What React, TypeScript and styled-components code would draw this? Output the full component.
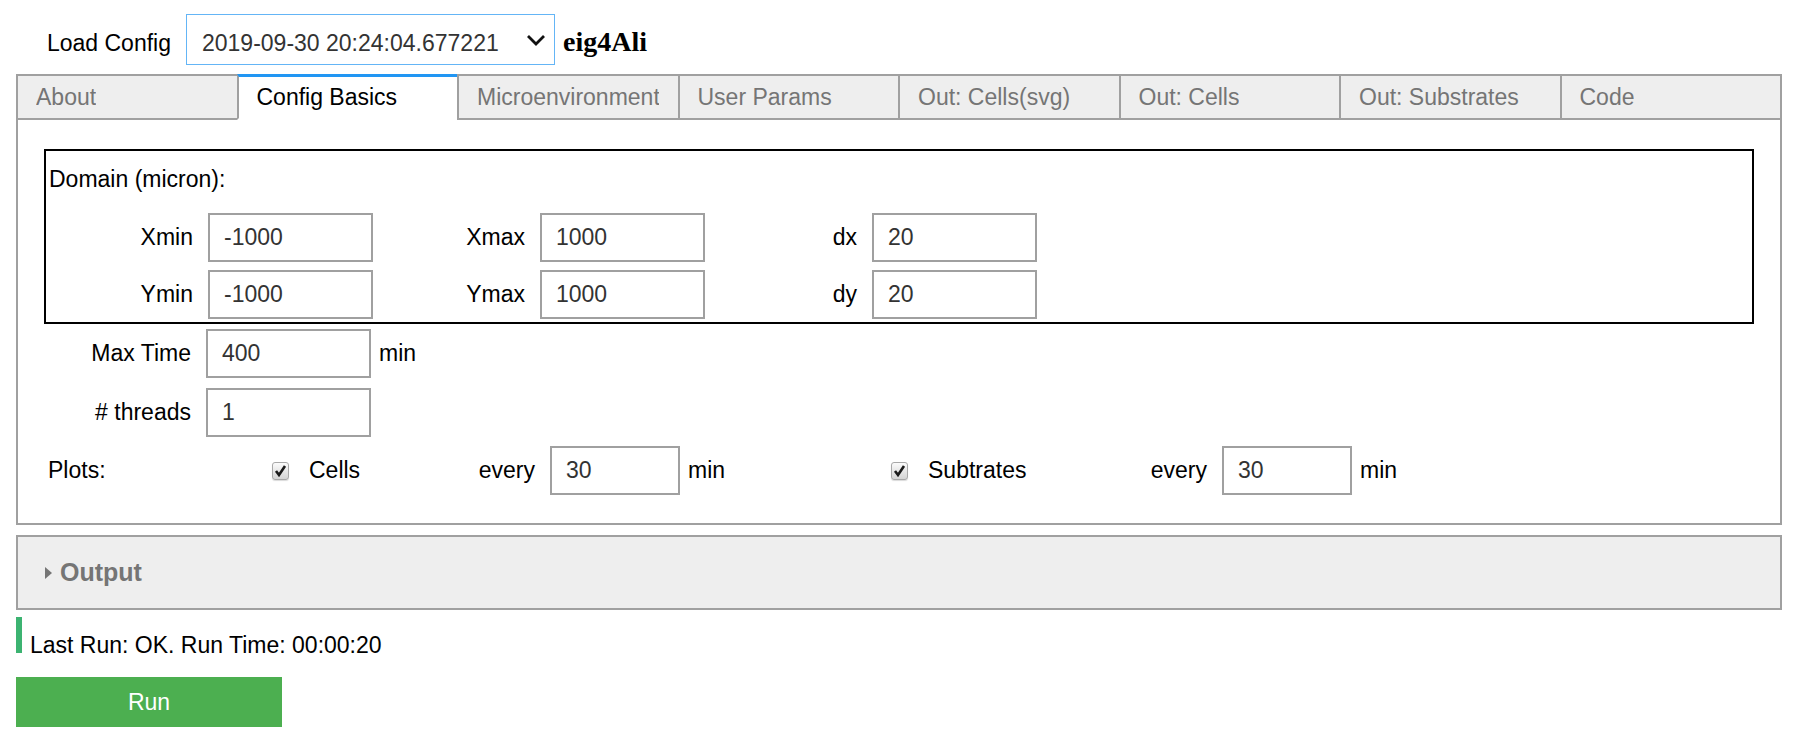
import React from 'react';
import styled, { createGlobalStyle } from 'styled-components';

const GlobalStyle = createGlobalStyle`
  html, body {
    margin: 0;
    padding: 0;
    background: #fff;
  }
  body {
    font-family: 'Liberation Sans', Arial, Helvetica, sans-serif;
    font-size: 23px;
    color: #000;
  }
  * {
    box-sizing: border-box;
  }
`;

const Page = styled.div`
  width: 1766px;
  margin-left: 16px;
  padding-top: 14px;
`;

const Header = styled.div`
  display: flex;
  align-items: center;
  height: 51px;
`;

const HeaderLabel = styled.label`
  flex: none;
  width: 170px;
  padding: 7px 15px 0 0;
  text-align: right;
  line-height: 26px;
`;

const ConfigSelect = styled.div`
  flex: none;
  width: 369px;
  height: 51px;
  border: 1px solid #64b5f6;
  display: flex;
  align-items: center;
  justify-content: space-between;
  padding: 0 8px 0 15px;
  color: #333;
`;

const SelectText = styled.span`
  padding-top: 7px;
  line-height: 26px;
  white-space: nowrap;
`;

const Title = styled.b`
  margin-left: 8px;
  padding-top: 3px;
  font-family: 'Liberation Serif', 'Times New Roman', serif;
  font-size: 28px;
  line-height: 31px;
`;

const TabBar = styled.div`
  display: flex;
  margin-top: 9px;
`;

const Tab = styled.div<{ $active?: boolean }>`
  flex: 1 1 0;
  min-width: 0;
  height: 46px;
  display: flex;
  align-items: center;
  padding: 0 19px 0 18px;
  border: 2px solid #a0a0a0;
  border-right: none;
  background: ${(p) => (p.$active ? '#fff' : '#eeeeee')};
  color: ${(p) => (p.$active ? '#000' : '#757575')};
  white-space: nowrap;
  overflow: hidden;
  ${(p) =>
    p.$active &&
    `
    border-top: 3px solid #2196f3;
    border-bottom-color: #fff;
  `}
  &:last-child {
    border-right: 2px solid #a0a0a0;
  }
`;

const TabText = styled.span`
  display: block;
  overflow: hidden;
  white-space: nowrap;
`;

const Panel = styled.div`
  border: 2px solid #a0a0a0;
  border-top: none;
  padding: 29px 26px 28px 26px;
`;

const DomainBox = styled.div`
  border: 2px solid #000;
  padding-bottom: 3px;
`;

const DomainTitle = styled.div`
  height: 62px;
  padding: 15px 0 0 3px;
  line-height: 26px;
`;

const DomainRows = styled.div`
  display: flex;
  flex-direction: column;
  gap: 8px;
`;

const Row = styled.div<{ $gap?: number; $top?: number }>`
  display: flex;
  align-items: center;
  height: 49px;
  gap: ${(p) => p.$gap ?? 0}px;
  margin-top: ${(p) => p.$top ?? 0}px;
`;

const Field = styled.div`
  display: flex;
  align-items: center;
  flex: none;
`;

const FieldLabel = styled.label<{ $width: number }>`
  flex: none;
  width: ${(p) => p.$width}px;
  padding-right: 15px;
  text-align: right;
  white-space: nowrap;
`;

const NumberInput = styled.input<{ $width: number }>`
  flex: none;
  width: ${(p) => p.$width}px;
  height: 49px;
  border: 2px solid #a0a0a0;
  border-radius: 0;
  padding: 0 12px 0 14px;
  font: inherit;
  color: #333;
  background: #fff;
  outline: none;
`;

const Unit = styled.span<{ $width?: number }>`
  flex: none;
  margin-left: 8px;
  width: ${(p) => (p.$width ? `${p.$width}px` : 'auto')};
`;

const PlotsLabel = styled.span`
  flex: none;
  width: 228px;
  padding-left: 4px;
`;

const CheckField = styled.label<{ $width: number }>`
  flex: none;
  width: ${(p) => p.$width}px;
  display: flex;
  align-items: center;
  gap: 20px;
`;

const CheckBox = styled.span`
  flex: none;
  width: 17px;
  height: 18px;
  border: 1px solid #a8a8a8;
  border-radius: 3px;
  background: linear-gradient(#fbfbfb, #d4d4d4);
  box-shadow: 0 1px 1px rgba(0, 0, 0, 0.15);
  display: flex;
  align-items: center;
  justify-content: center;
`;

const OutputBox = styled.div`
  margin-top: 10px;
  height: 75px;
  background: #eeeeee;
  border: 2px solid #a0a0a0;
  display: flex;
  align-items: center;
  gap: 8px;
  padding-left: 27px;
  color: #757575;
  font-weight: bold;
  font-size: 25px;
`;

const Caret = styled.span`
  width: 0;
  height: 0;
  border-left: 7px solid #757575;
  border-top: 6px solid transparent;
  border-bottom: 6px solid transparent;
`;

const Status = styled.div`
  margin-top: 7px;
  height: 36px;
  border-left: 6px solid #3cb371;
  padding: 17px 0 0 8px;
  line-height: 23px;
  white-space: nowrap;
`;

const RunButton = styled.button`
  display: block;
  margin-top: 24px;
  width: 266px;
  height: 50px;
  border: none;
  background: #4caf50;
  color: #fff;
  font: inherit;
`;

const Chevron = () => (
  <svg width="20" height="12" viewBox="0 0 20 12">
    <path d="M2 2 L10 10 L18 2" fill="none" stroke="#111" strokeWidth="2.8" />
  </svg>
);

const Check = () => (
  <svg width="13" height="13" viewBox="0 0 13 13">
    <path d="M2 7 L5 11 L11 2" fill="none" stroke="#1a1a1a" strokeWidth="2.6" />
  </svg>
);

const tabs = [
  'About',
  'Config Basics',
  'Microenvironment',
  'User Params',
  'Out: Cells(svg)',
  'Out: Cells',
  'Out: Substrates',
  'Code',
];

const domainRows = [
  [
    ['Xmin', '-1000'],
    ['Xmax', '1000'],
    ['dx', '20'],
  ],
  [
    ['Ymin', '-1000'],
    ['Ymax', '1000'],
    ['dy', '20'],
  ],
];

const App = () => (
  <>
    <GlobalStyle />
    <Page>
      <Header>
        <HeaderLabel>Load Config</HeaderLabel>
        <ConfigSelect>
          <SelectText>2019-09-30 20:24:04.677221</SelectText>
          <Chevron />
        </ConfigSelect>
        <Title>eig4Ali</Title>
      </Header>

      <TabBar>
        {tabs.map((t) => (
          <Tab key={t} $active={t === 'Config Basics'}>
            <TabText>{t}</TabText>
          </Tab>
        ))}
      </TabBar>

      <Panel>
        <DomainBox>
          <DomainTitle>Domain (micron):</DomainTitle>
          <DomainRows>
            {domainRows.map((row, i) => (
              <Row key={i} $gap={5}>
                {row.map(([label, value]) => (
                  <Field key={label}>
                    <FieldLabel $width={162}>{label}</FieldLabel>
                    <NumberInput $width={165} defaultValue={value} />
                  </Field>
                ))}
              </Row>
            ))}
          </DomainRows>
        </DomainBox>

        <Row $top={5}>
          <Field>
            <FieldLabel $width={162}>Max Time</FieldLabel>
            <NumberInput $width={165} defaultValue="400" />
          </Field>
          <Unit>min</Unit>
        </Row>
        <Row $top={10}>
          <Field>
            <FieldLabel $width={162}># threads</FieldLabel>
            <NumberInput $width={165} defaultValue="1" />
          </Field>
        </Row>
        <Row $top={9}>
          <PlotsLabel>Plots:</PlotsLabel>
          <CheckField $width={180}>
            <CheckBox>
              <Check />
            </CheckBox>
            Cells
          </CheckField>
          <Field>
            <FieldLabel $width={98}>every</FieldLabel>
            <NumberInput $width={130} defaultValue="30" />
          </Field>
          <Unit $width={203}>min</Unit>
          <CheckField $width={233}>
            <CheckBox>
              <Check />
            </CheckBox>
            Subtrates
          </CheckField>
          <Field>
            <FieldLabel $width={98}>every</FieldLabel>
            <NumberInput $width={130} defaultValue="30" />
          </Field>
          <Unit>min</Unit>
        </Row>
      </Panel>

      <OutputBox>
        <Caret />
        Output
      </OutputBox>

      <Status>Last Run: OK. Run Time: 00:00:20</Status>
      <RunButton>Run</RunButton>
    </Page>
  </>
);

export default App;
